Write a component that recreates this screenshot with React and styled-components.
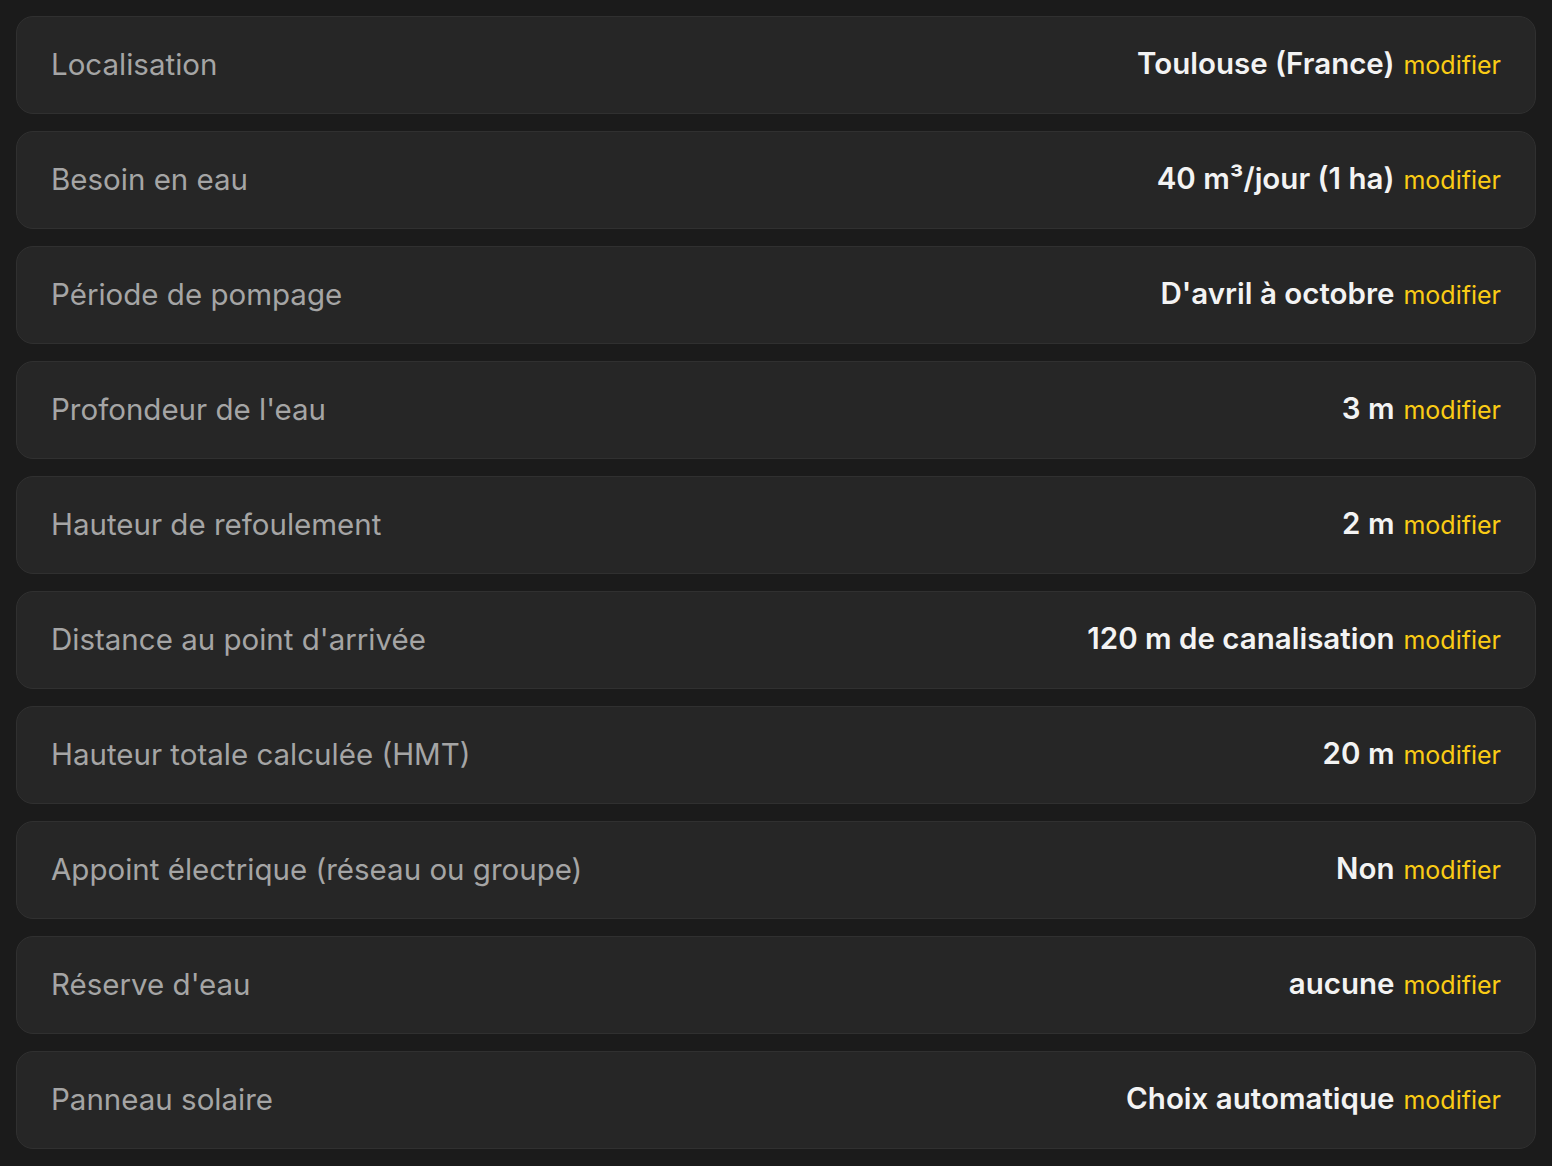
import React from "react";
import styled, { createGlobalStyle } from "styled-components";

const GlobalStyle = createGlobalStyle`
  html, body {
    margin: 0;
    padding: 0;
    background: #1b1b1b;
  }
  body {
    font-family: Inter, "Noto Sans", "Liberation Sans", sans-serif;
  }
`;

const rows = [
  { label: "Localisation", value: "Toulouse (France)" },
  { label: "Besoin en eau", value: "40 m³/jour (1 ha)" },
  { label: "Période de pompage", value: "D'avril à octobre" },
  { label: "Profondeur de l'eau", value: "3 m" },
  { label: "Hauteur de refoulement", value: "2 m" },
  { label: "Distance au point d'arrivée", value: "120 m de canalisation" },
  { label: "Hauteur totale calculée (HMT)", value: "20 m" },
  { label: "Appoint électrique (réseau ou groupe)", value: "Non" },
  { label: "Réserve d'eau", value: "aucune" },
  { label: "Panneau solaire", value: "Choix automatique" },
];

const App = () => {
  return (
    <>
      <GlobalStyle />
      <List>
        {rows.map((r) => (
          <Row key={r.label}>
            <Label>{r.label}</Label>
            <Right>
              <Value>{r.value}</Value>
              <Edit href="#">modifier</Edit>
            </Right>
          </Row>
        ))}
      </List>
    </>
  );
};

const List = styled.div`
  display: flex;
  flex-direction: column;
  gap: 17px;
  padding: 16px;
`;

const Row = styled.div`
  box-sizing: border-box;
  height: 98px;
  display: flex;
  align-items: center;
  justify-content: space-between;
  padding: 0 34px 3px;
  background: #262626;
  border: 1px solid #303030;
  border-radius: 17px;
  line-height: 36px;
`;

const Label = styled.span`
  font-size: 29.5px;
  color: #a5a5a5;
  font-weight: 400;
`;

const Right = styled.div`
  display: flex;
  align-items: baseline;
  gap: 9px;
`;

const Value = styled.span`
  font-size: 29.5px;
  font-weight: 600;
  color: #f3f3f3;
`;

const Edit = styled.a`
  font-size: 25px;
  color: #facc15;
  text-decoration: none;
`;

export default App;
